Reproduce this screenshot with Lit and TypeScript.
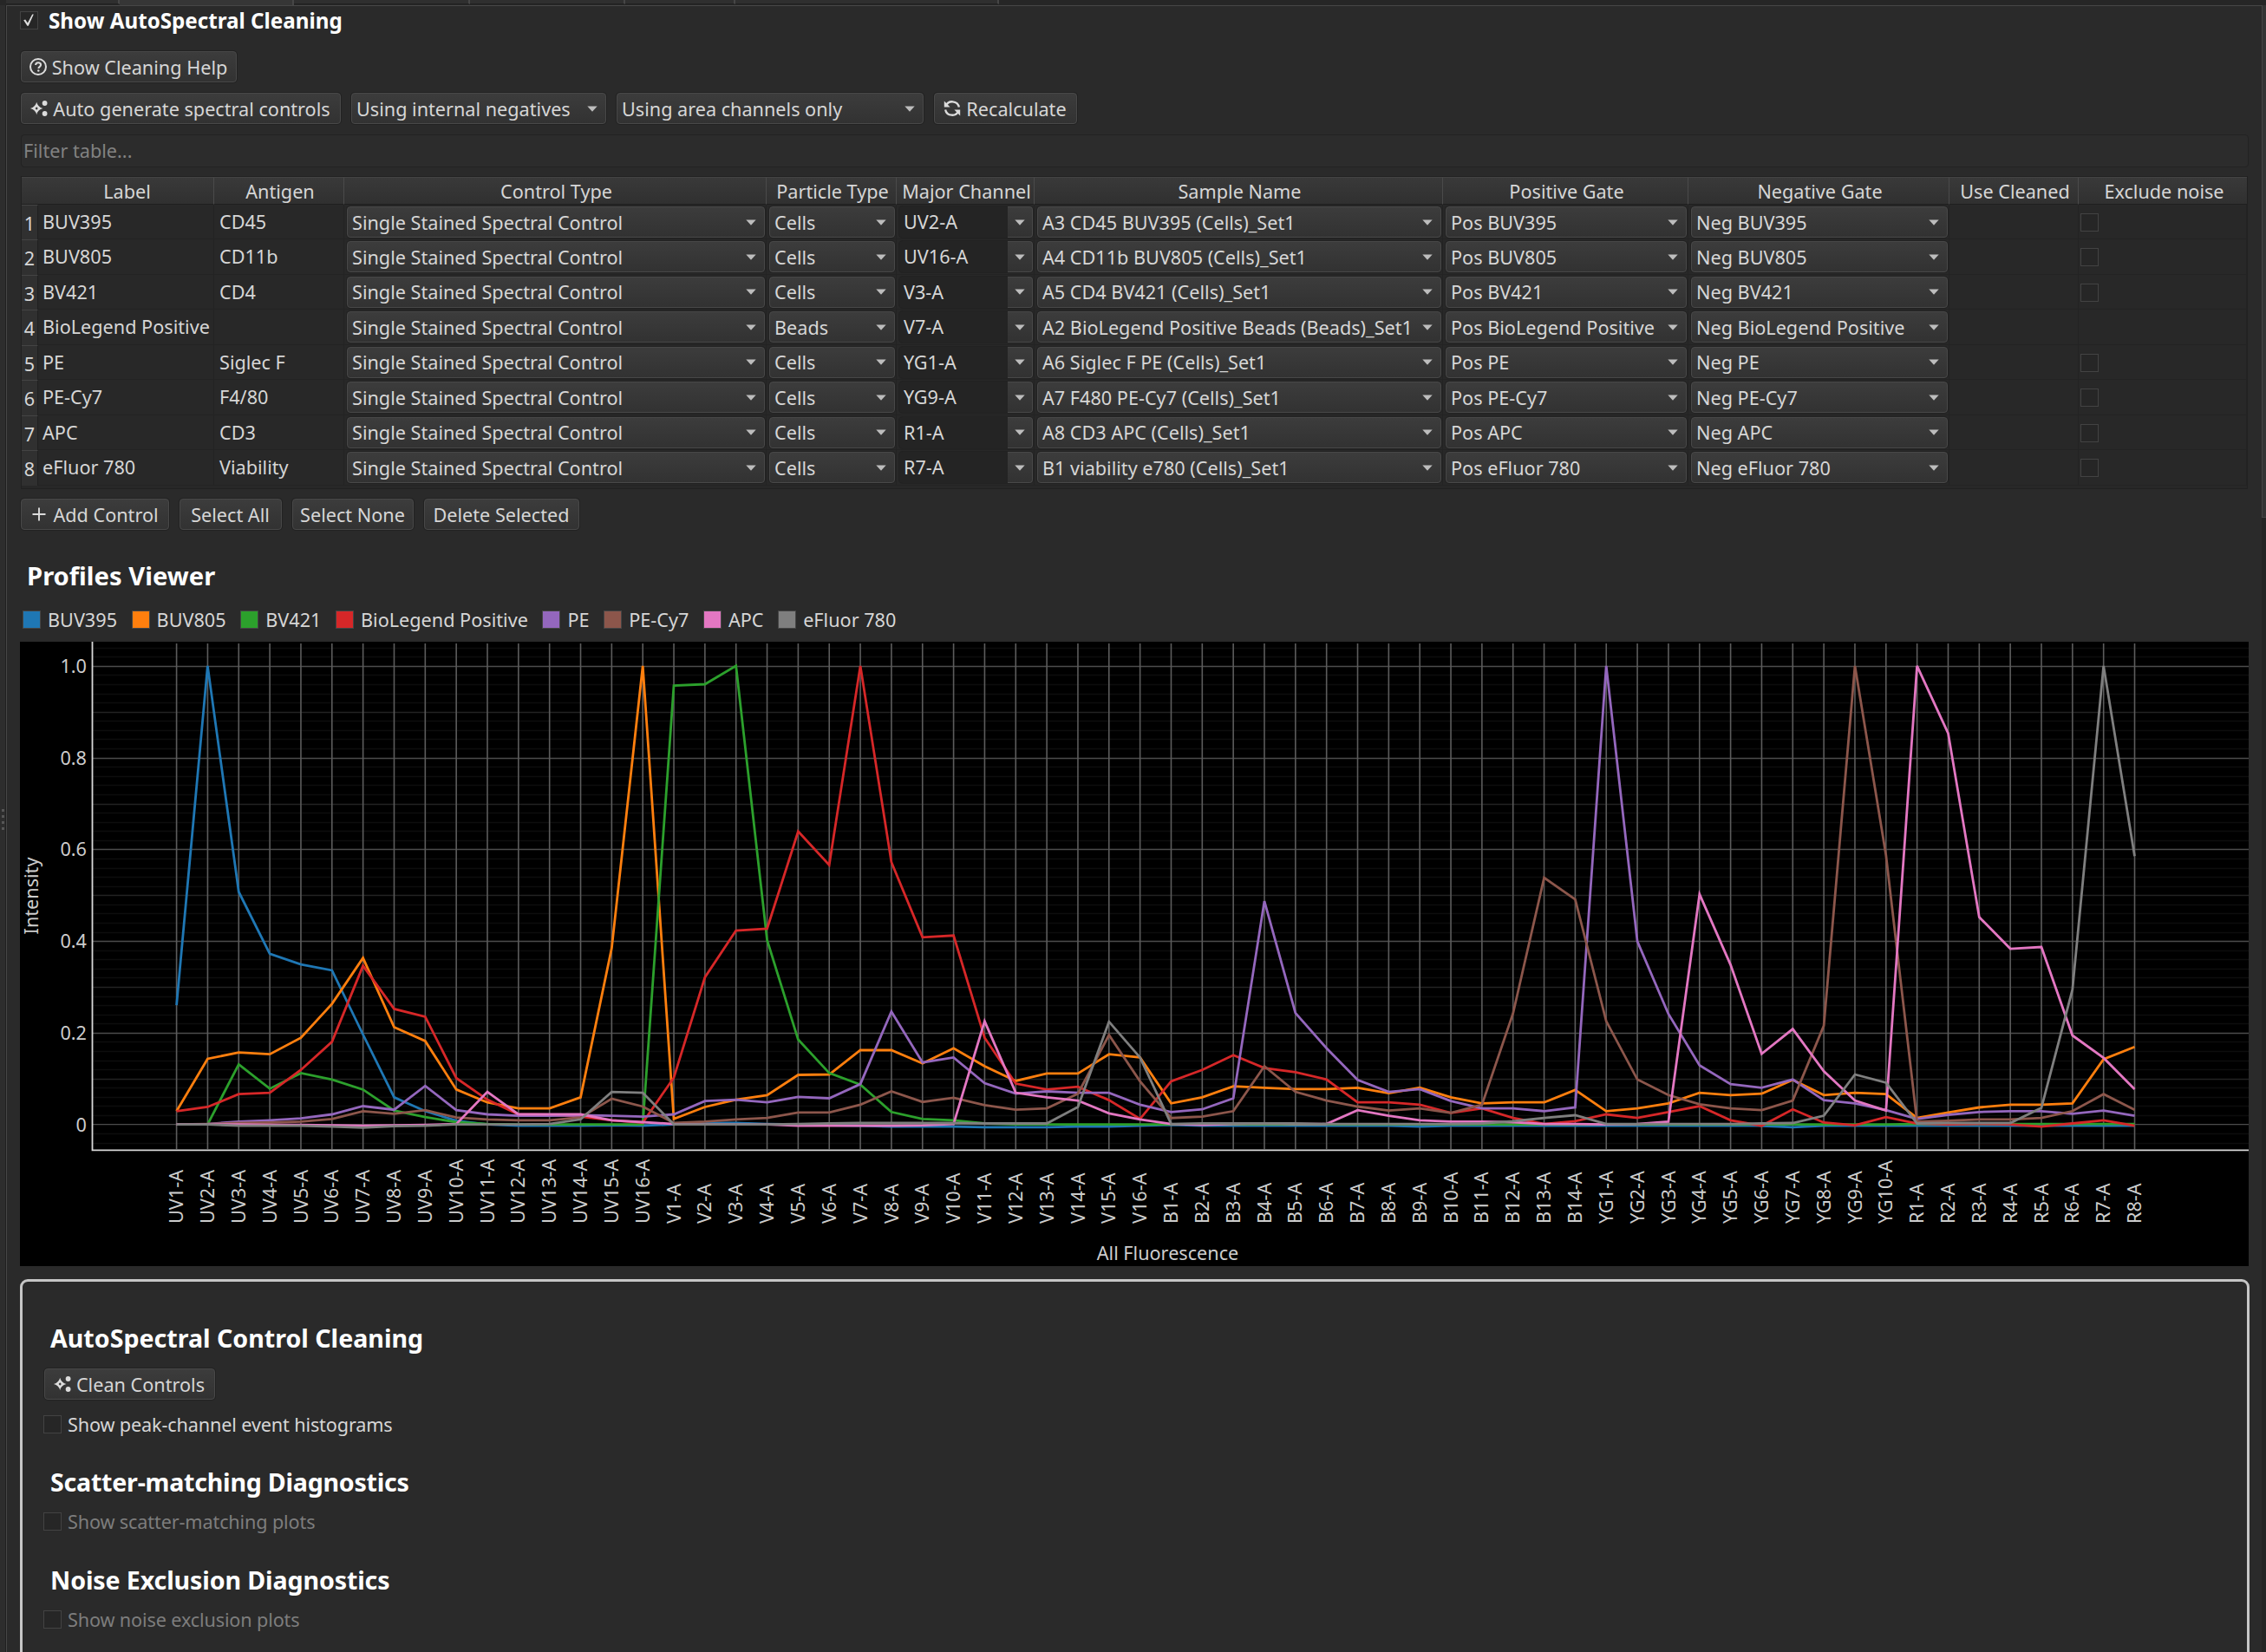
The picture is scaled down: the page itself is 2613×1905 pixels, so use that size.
import { LitElement, html, svg, css, nothing } from "lit";
import { customElement, property } from "lit/decorators.js";

interface Control {
  label: string;
  antigen: string;
  particle: string;
  channel: string;
  sample: string;
  cleanable: boolean;
}

const CONTROLS: Control[] = [
  { label: "BUV395", antigen: "CD45", particle: "Cells", channel: "UV2-A", sample: "A3 CD45 BUV395 (Cells)_Set1", cleanable: true },
  { label: "BUV805", antigen: "CD11b", particle: "Cells", channel: "UV16-A", sample: "A4 CD11b BUV805 (Cells)_Set1", cleanable: true },
  { label: "BV421", antigen: "CD4", particle: "Cells", channel: "V3-A", sample: "A5 CD4 BV421 (Cells)_Set1", cleanable: true },
  { label: "BioLegend Positive", antigen: "", particle: "Beads", channel: "V7-A", sample: "A2 BioLegend Positive Beads (Beads)_Set1", cleanable: false },
  { label: "PE", antigen: "Siglec F", particle: "Cells", channel: "YG1-A", sample: "A6 Siglec F PE (Cells)_Set1", cleanable: true },
  { label: "PE-Cy7", antigen: "F4/80", particle: "Cells", channel: "YG9-A", sample: "A7 F480 PE-Cy7 (Cells)_Set1", cleanable: true },
  { label: "APC", antigen: "CD3", particle: "Cells", channel: "R1-A", sample: "A8 CD3 APC (Cells)_Set1", cleanable: true },
  { label: "eFluor 780", antigen: "Viability", particle: "Cells", channel: "R7-A", sample: "B1 viability e780 (Cells)_Set1", cleanable: true },
];

const HEADERS = ["Label", "Antigen", "Control Type", "Particle Type", "Major Channel", "Sample Name", "Positive Gate", "Negative Gate", "Use Cleaned", "Exclude noise"];

const span = (prefix: string, n: number) => Array.from({ length: n }, (_, i) => `${prefix}${i + 1}-A`);
const CHANNELS = [...span("UV", 16), ...span("V", 16), ...span("B", 14), ...span("YG", 10), ...span("R", 8)];

// Normalised intensities per channel, in thousandths.
const SERIES: { name: string; color: string; values: number[] }[] = [
  { name: "BUV395", color: "#1f77b4", values: [260, 1000, 507, 372, 349, 336, 196, 59, 29, 8, 0, -3, -3, -3, -2, -3, 0, 3, 3, 1, 0, -2, -3, -5, -5, -5, -6, -6, -6, -5, -5, -3, -1, -3, -3, -3, -3, -3, -3, -3, -5, -3, -3, -3, -3, -3, -3, -3, -3, -3, -3, -3, -6, -3, -3, -3, -3, -3, -3, -3, -3, -3, -3, -3] },
  { name: "BUV805", color: "#ff7f0e", values: [29, 143, 157, 153, 189, 263, 363, 212, 182, 76, 48, 35, 35, 59, 385, 1000, 12, 38, 54, 64, 108, 109, 162, 162, 133, 166, 127, 95, 111, 111, 153, 146, 46, 59, 83, 80, 77, 77, 80, 68, 80, 59, 46, 48, 48, 75, 29, 35, 46, 69, 64, 67, 97, 64, 69, 66, 14, 26, 37, 43, 43, 46, 142, 169] },
  { name: "BV421", color: "#2ca02c", values: [0, 0, 131, 78, 112, 98, 76, 30, 16, 5, 1, 0, 0, 0, 0, 0, 957, 960, 1000, 402, 185, 112, 87, 27, 12, 9, 2, 0, 0, 0, 0, 0, 0, 0, 0, 0, 0, 0, 0, 0, 0, 0, 0, 0, 0, 0, 0, 0, 0, 0, 0, 0, 0, 0, 0, 0, 1, 1, 1, 1, 1, 1, 1, 1] },
  { name: "BioLegend Positive", color: "#d62728", values: [29, 38, 66, 69, 119, 180, 346, 252, 235, 101, 54, 22, 21, 17, 9, 4, 102, 321, 423, 427, 639, 566, 1000, 572, 408, 412, 189, 89, 76, 82, 53, 12, 94, 119, 151, 123, 114, 98, 48, 48, 43, 25, 35, 14, 1, 7, 22, 14, 27, 40, 9, -3, 33, 4, -2, 16, 2, 0, 1, 0, -5, 2, 9, -3] },
  { name: "PE", color: "#9467bd", values: [0, 1, 6, 9, 13, 22, 40, 32, 84, 31, 22, 19, 19, 20, 19, 17, 22, 51, 54, 48, 60, 57, 88, 246, 135, 146, 90, 67, 72, 69, 69, 43, 27, 33, 57, 487, 243, 166, 97, 71, 77, 51, 35, 35, 29, 37, 1000, 399, 241, 129, 88, 80, 98, 53, 46, 31, 12, 21, 27, 29, 29, 23, 30, 19] },
  { name: "PE-Cy7", color: "#8c564b", values: [0, 1, 3, 4, 6, 12, 29, 23, 31, 15, 11, 9, 9, 15, 56, 39, 3, 6, 11, 14, 26, 26, 43, 72, 49, 58, 42, 32, 35, 67, 195, 94, 14, 17, 29, 127, 71, 52, 39, 30, 35, 25, 43, 242, 538, 491, 225, 98, 64, 44, 35, 31, 52, 215, 1000, 587, 6, 8, 11, 11, 14, 29, 66, 32] },
  { name: "APC", color: "#e377c2", values: [0, 0, 0, -1, -1, -2, -3, -2, -1, 1, 71, 22, 22, 22, 9, 5, 1, 0, 0, 0, -3, -3, -3, -3, -2, 1, 225, 69, 59, 52, 24, 11, 1, -1, 1, 2, 1, 1, 31, 19, 9, 6, 6, 5, 1, 1, 0, 1, 6, 502, 348, 154, 208, 116, 52, 30, 1000, 853, 452, 383, 387, 194, 145, 77] },
  { name: "eFluor 780", color: "#7f7f7f", values: [0, 0, -3, -3, -3, -5, -7, -4, -3, 0, 0, 0, 1, 11, 71, 69, 0, 0, 0, 0, 1, 2, 3, 3, 3, 3, 2, 2, 2, 38, 224, 146, 1, 2, 2, 2, 2, 1, 1, 1, 1, 1, 2, 7, 14, 20, 1, 1, 1, 1, 1, 2, 3, 19, 109, 91, 2, 3, 3, 3, 36, 294, 1000, 585] },
];

const ICONS = {
  help: svg`<circle cx="10" cy="10" r="9" fill="none" stroke="#dcdcdc" stroke-width="2"/>
    <path d="M7.1 8.1C7.1 6.2 8.3 5.2 10.1 5.2s3 1.1 3 2.6c0 2.1-2.7 2.1-2.7 4.2" fill="none" stroke="#dcdcdc" stroke-width="2"/>
    <circle cx="10.3" cy="14.5" r="1.2" fill="#dcdcdc"/>`,
  sparkle: svg`<path fill-rule="evenodd" fill="#dcdcdc" d="M7.2 2.8Q8.6 8.6 14.4 10Q8.6 11.4 7.2 17.2Q5.8 11.4 0 10Q5.8 8.6 7.2 2.8ZM7.2 8.2L5.6 10L7.2 11.8L8.8 10Z"/>
    <circle cx="16.6" cy="4" r="2.9" fill="#dcdcdc"/><circle cx="16.6" cy="16" r="2.9" fill="#dcdcdc"/>`,
  sync: svg`<path d="M2.6 7.4A8 8 0 0 1 17.9 8.6M17.4 12.6A8 8 0 0 1 2.1 11.4" fill="none" stroke="#dcdcdc" stroke-width="2.3"/>
    <path d="M.8 1.6V8.4H7.6ZM19.2 18.4V11.6H12.4Z" fill="#dcdcdc"/>`,
  plus: svg`<path d="M10 2.5V17.5M2.5 10H17.5" fill="none" stroke="#dcdcdc" stroke-width="1.9"/>`,
};
type IconName = keyof typeof ICONS;

const controlFace = css`
  .face {
    box-sizing: border-box;
    height: 36px;
    border: 1.5px solid #484848;
    border-radius: 4px;
    background: linear-gradient(#3c3c3c, #323232);
    box-shadow: 0 0 0 1px #222;
    color: #d6d6d6;
    white-space: nowrap;
  }
`;

@customElement("tool-button")
export class ToolButton extends LitElement {
  @property() icon?: IconName;
  @property() label = "";
  static styles = [controlFace, css`
    :host { display: block; }
    .face { display: flex; align-items: center; justify-content: center; gap: 6px; padding-right: 1px; }
    .icon { width: 20px; height: 20px; flex: none; }
  `];
  render() {
    return html`<div class="face">
      ${this.icon ? html`<svg class="icon" viewBox="0 0 20 20">${ICONS[this.icon]}</svg>` : nothing}
      <span>${this.label}</span>
    </div>`;
  }
}

@customElement("combo-box")
export class ComboBox extends LitElement {
  @property() value = "";
  @property({ type: Boolean }) editable = false;
  static styles = [controlFace, css`
    :host { display: block; min-width: 0; }
    .face { display: flex; align-items: center; justify-content: space-between; padding: 0 9px 0 5px; }
    .arrow { width: 12px; height: 7px; flex: none; fill: #bdbdbd; }
    .edit { display: flex; height: 36px; box-shadow: 0 0 0 1px #222; border-radius: 4px; background: #242424; }
    .text { flex: 1; padding-left: 5px; line-height: 36px; color: #d6d6d6; white-space: nowrap; }
    .drop { width: 29px; padding: 0; justify-content: center; border-left: 0; border-radius: 0 4px 4px 0; box-shadow: none; }
  `];
  render() {
    const arrow = html`<svg class="arrow" viewBox="0 0 12 7"><path d="M.3 .4H11.7L6 6.8Z"/></svg>`;
    return this.editable
      ? html`<div class="edit"><span class="text">${this.value}</span><div class="face drop">${arrow}</div></div>`
      : html`<div class="face"><span>${this.value}</span>${arrow}</div>`;
  }
}

@customElement("check-box")
export class CheckBox extends LitElement {
  @property({ type: Boolean }) checked = false;
  static styles = css`
    :host { display: block; flex: none; }
    .box { box-sizing: border-box; width: 21px; height: 21px; border: 1.5px solid #434343; background: #262626; }
    .tick { display: block; width: 18px; height: 18px; }
  `;
  render() {
    return html`<div class="box">${this.checked
      ? html`<svg class="tick" viewBox="0 0 18 18"><path d="M3.2 9.2L5.2 8.6L7.9 12.6L13.2 2.6L14.8 2.6L8.8 15.8H7.4Z" fill="#dedede"/></svg>`
      : nothing}</div>`;
  }
}

@customElement("controls-table")
export class ControlsTable extends LitElement {
  static styles = css`
    :host { display: block; }
    .grid {
      box-sizing: border-box;
      display: grid;
      grid-template-columns: 19px 203px 150px 487px 150px 159px 471px 283px 301px 149px 194px;
      grid-template-rows: 32px;
      grid-auto-rows: 40.44px;
      height: 361px;
      width: 2568px;
      border: 1px solid #212121;
      background: #282828;
    }
    .head {
      box-sizing: border-box;
      background: linear-gradient(#393939, #303030);
      border-right: 1px solid #4a4a4a;
      border-top: 1px solid #444;
      border-bottom: 1px solid #1f1f1f;
      padding-left: 3px;
      text-align: center;
      line-height: 31px;
      color: #d6d6d6;
      white-space: nowrap;
    }
    .corner, .last { border-right: 0; }
    .num {
      box-sizing: border-box;
      background: #303030;
      border-top: 1px solid #444;
      border-right: 1px solid #202020;
      text-align: center;
      line-height: 41px;
    }
    .cell {
      box-sizing: border-box;
      border-right: 1px solid #232323;
      border-bottom: 1px solid #232323;
      line-height: 39px;
      padding-left: 5px;
      white-space: nowrap;
    }
    .antigen { padding-left: 6px; }
    .combo { padding: 2px 1px 0 3px; line-height: normal; }
    .check { padding: 10px 0 0 2px; }
  `;
  private combo(value: string, editable = false) {
    return html`<div class="cell combo"><combo-box .value=${value} ?editable=${editable}></combo-box></div>`;
  }
  render() {
    return html`<div class="grid">
      <div class="head corner"></div>
      ${HEADERS.map((h, i) => html`<div class="head ${i === HEADERS.length - 1 ? "last" : ""}">${h}</div>`)}
      ${CONTROLS.map((c, i) => html`
        <div class="num">${i + 1}</div>
        <div class="cell">${c.label}</div>
        <div class="cell antigen">${c.antigen}</div>
        ${this.combo("Single Stained Spectral Control")}
        ${this.combo(c.particle)}
        ${this.combo(c.channel, true)}
        ${this.combo(c.sample)}
        ${this.combo(`Pos ${c.label}`)}
        ${this.combo(`Neg ${c.label}`)}
        <div class="cell"></div>
        <div class="cell check">${c.cleanable ? html`<check-box></check-box>` : nothing}</div>
      `)}
    </div>`;
  }
}

@customElement("profiles-chart")
export class ProfilesChart extends LitElement {
  static styles = css`
    :host { display: block; }
    .chart { display: block; background: #000; overflow: visible; }
    .label { fill: #cdcdcd; }
  `;
  render() {
    const x = (i: number) => 180.6 + i * 35.84;
    const y = (v: number) => 556.6 - v * 528.7;
    const ticks = Array.from({ length: 56 }, (_, i) => i - 2);
    return html`<svg class="chart" width="2570" height="720" viewBox="0 0 2570 720">
      ${ticks.filter((t) => t !== 0).map((t) => {
        const color = t % 10 === 0 ? "#4c4c4c" : t % 5 === 0 ? "#232323" : "#0d0d0d";
        const yy = Math.round(y(t / 50)) + 0.5;
        return yy > 1 && yy < 585 ? svg`<path d="M84 ${yy}H2570" stroke=${color} stroke-width="1.4"/>` : nothing;
      })}
      <path d=${`M84 ${y(0)}H2570`} stroke="#4c4c4c" stroke-width="1.4"/>
      ${CHANNELS.map((_, i) => svg`<path d="M${x(i)} 2V585" stroke="#5c5c5c" stroke-width="1.6"/>`)}
      ${SERIES.map((s) => svg`<polyline fill="none" stroke=${s.color} stroke-width="2.8"
        points=${s.values.map((v, i) => `${x(i).toFixed(1)},${y(v / 1000).toFixed(1)}`).join(" ")}/>`)}
      <path d="M83.5 0V586.4H2570" fill="none" stroke="#d8d8d8" stroke-width="1.8"/>
      ${[0, 0.2, 0.4, 0.6, 0.8, 1].map((v) => svg`<text class="label" text-anchor="end" x="77" y=${y(v) + 8}>${v === 0 ? "0" : v.toFixed(1)}</text>`)}
      ${CHANNELS.map((c, i) => svg`<text class="label" transform="translate(${x(i) + 7.6} 671) rotate(-90)">${c}</text>`)}
      <text class="label" text-anchor="middle" x="1323.5" y="713">All Fluorescence</text>
      <text class="label" text-anchor="middle" transform="translate(21 293) rotate(-90)">Intensity</text>
    </svg>`;
  }
}

@customElement("app-root")
export class AppRoot extends LitElement {
  static styles = css`
    :host {
      display: block;
      width: 2613px;
      height: 1905px;
      overflow: hidden;
      background: #2a2a2a;
      color: #d6d6d6;
      font: 21.65px "Noto Sans", sans-serif;
    }
    .window { display: grid; grid-template: 6px 1899px / 7px 2601px 5px; }
    .tabs { grid-column: 1 / -1; display: flex; background: #262626; padding-left: 7px; }
    .tab { box-sizing: border-box; height: 5px; background: #2f2f2f; border-right: 2px solid #464646; border-bottom: 1px solid #202020; }
    .t1 { width: 131px; }
    .t2 { width: 201px; height: 6px; background: #363636; border-bottom: 0; }
    .t3 { width: 203px; }
    .t4 { width: 179px; }
    .t5 { width: 127px; }
    .t6 { width: 304px; }
    .handle { display: flex; flex-direction: column; gap: 4px; padding: 927px 0 0 2px; background: #2d2d2d; border-right: 1px solid #202020; }
    .dot { width: 3px; height: 3px; background: #565656; }
    .page { box-sizing: border-box; border-left: 1.5px solid #474747; border-top: 1.5px solid #474747; padding-left: 16px; }
    .scroll { background: #242424; }
    .thumb { height: 590px; background: #343434; border-left: 1px solid #454545; border-bottom: 1px solid #454545; }
    .title { display: flex; align-items: center; gap: 12px; height: 33px; margin-left: -1px; font-size: 24.2px; font-weight: 700; color: #fff; }
    .row { display: flex; }
    .help { padding-top: 19px; }
    .tools { padding-top: 12px; gap: 12px; }
    .row tool-button, .row combo-box { flex: none; }
    .w-help { width: 249px; }
    .w-auto { width: 369px; }
    .w-neg { width: 294px; }
    .w-area { width: 354px; }
    .w-recalc { width: 165px; }
    .w-add { width: 171px; }
    .w-all { width: 118px; }
    .w-none { width: 140px; }
    .w-del { width: 179px; }
    .w-clean { width: 197px; }
    .filter { box-sizing: border-box; width: 2569px; height: 38px; margin-top: 12px; border: 1.5px solid #222; border-radius: 4px; background: #2c2c2c; padding-left: 2px; line-height: 36px; color: #828282; }
    .table { padding-top: 10px; }
    .actions { padding-top: 11px; gap: 12px; }
    .heading { margin: 0; font-size: 28.6px; line-height: 38px; font-weight: 700; color: #fff; white-space: nowrap; }
    .profiles { padding: 34px 0 0 7px; font-size: 29.2px; }
    .legend { display: flex; gap: 17.6px; padding: 16px 0 0 3px; height: 30px; align-items: center; }
    .key { display: flex; align-items: center; gap: 9px; white-space: nowrap; }
    .swatch { width: 19px; height: 19px; flex: none; outline: 1px solid #454545; }
    .chart { padding-top: 11px; margin-left: -1px; }
    .panel { box-sizing: border-box; width: 2571px; height: 460px; margin: 15px 0 0 -1px; border: 3px solid #c6c6c6; border-radius: 9px; padding: 46px 0 0 24px; }
    .panel .heading { padding-left: 8px; }
    .clean { padding: 16px 0 0 1px; }
    .option { display: flex; align-items: center; gap: 7px; height: 30px; letter-spacing: -0.14px; }
    .o1 { padding-top: 13px; }
    .o2 { padding-top: 11px; }
    .h2 { padding-top: 33px; letter-spacing: -0.24px; }
    .h3 { padding-top: 34px; letter-spacing: -0.12px; }
    .off { color: #7d7d7d; }
  `;
  render() {
    return html`<div class="window">
      <div class="tabs">${[1, 2, 3, 4, 5, 6].map((n) => html`<div class="tab t${n}"></div>`)}</div>
      <div class="handle">${[1, 2, 3, 4].map(() => html`<div class="dot"></div>`)}</div>
      <div class="page">
        <div class="title"><check-box checked></check-box><span class="title-text">Show AutoSpectral Cleaning</span></div>
        <div class="row help"><tool-button class="w-help" icon="help" label="Show Cleaning Help"></tool-button></div>
        <div class="row tools">
          <tool-button class="w-auto" icon="sparkle" label="Auto generate spectral controls"></tool-button>
          <combo-box class="w-neg" value="Using internal negatives"></combo-box>
          <combo-box class="w-area" value="Using area channels only"></combo-box>
          <tool-button class="w-recalc" icon="sync" label="Recalculate"></tool-button>
        </div>
        <div class="filter">Filter table...</div>
        <controls-table class="table"></controls-table>
        <div class="row actions">
          <tool-button class="w-add" icon="plus" label="Add Control"></tool-button>
          <tool-button class="w-all" label="Select All"></tool-button>
          <tool-button class="w-none" label="Select None"></tool-button>
          <tool-button class="w-del" label="Delete Selected"></tool-button>
        </div>
        <h2 class="heading profiles">Profiles Viewer</h2>
        <div class="legend">${SERIES.map((s) => html`<div class="key"><span class="swatch" style="background:${s.color}"></span>${s.name}</div>`)}</div>
        <profiles-chart class="chart"></profiles-chart>
        <div class="panel">
          <h2 class="heading">AutoSpectral Control Cleaning</h2>
          <div class="row clean"><tool-button class="w-clean" icon="sparkle" label="Clean Controls"></tool-button></div>
          <div class="option o1"><check-box></check-box>Show peak-channel event histograms</div>
          <h2 class="heading h2">Scatter-matching Diagnostics</h2>
          <div class="option o2 off"><check-box></check-box>Show scatter-matching plots</div>
          <h2 class="heading h3">Noise Exclusion Diagnostics</h2>
          <div class="option o2 off"><check-box></check-box>Show noise exclusion plots</div>
        </div>
      </div>
      <div class="scroll"><div class="thumb"></div></div>
    </div>`;
  }
}
